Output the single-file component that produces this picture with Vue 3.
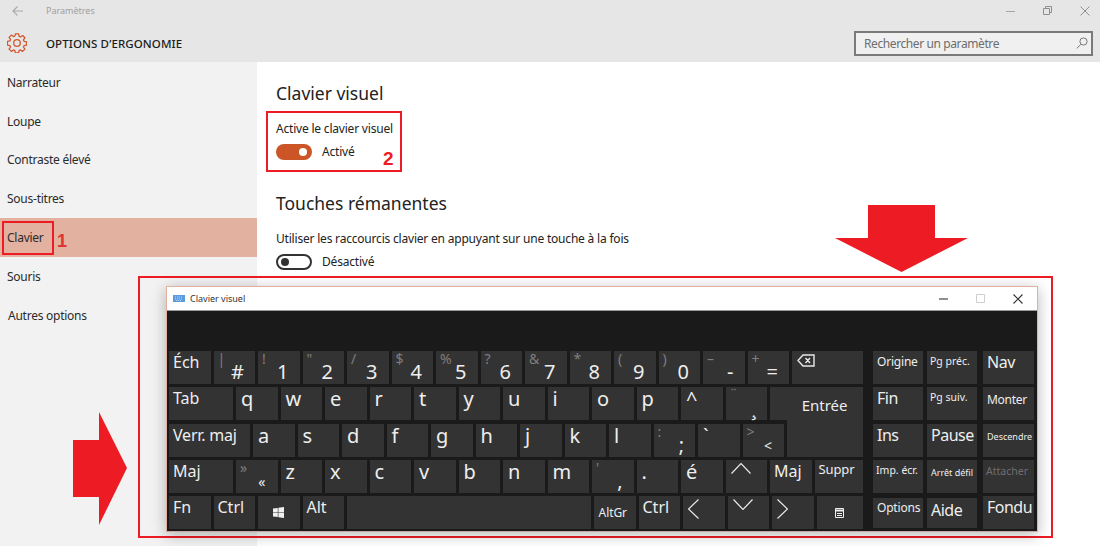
<script setup>
const nav = ['Narrateur', 'Loupe', 'Contraste élevé', 'Sous-titres', 'Clavier', 'Souris', 'Autres options']

const W = 41.5
const rows = [
  [
    { m: 'Éch', w: W, c: 'tl word' },
    { m: '#', s: '|', w: W, c: 'num' }, { m: '1', s: '!', w: W, c: 'num' }, { m: '2', s: '"', w: W, c: 'num' },
    { m: '3', s: '/', w: W, c: 'num' }, { m: '4', s: '$', w: W, c: 'num' }, { m: '5', s: '%', w: W, c: 'num' },
    { m: '6', s: '?', w: W, c: 'num' }, { m: '7', s: '&', w: W, c: 'num' }, { m: '8', s: '*', w: W, c: 'num' },
    { m: '9', s: '(', w: W, c: 'num' }, { m: '0', s: ')', w: W, c: 'num' }, { m: '-', s: '–', w: W, c: 'num' },
    { m: '=', s: '+', w: W, c: 'num' }, { icon: 'back', w: 71, c: 'tl' }
  ],
  [
    { m: 'Tab', w: 64, c: 'tl word' },
    ...['q', 'w', 'e', 'r', 't', 'y', 'u', 'i', 'o', 'p', '^'].map(m => ({ m, w: W, c: 'tl' })),
    { m: '¸', s: '¨', w: W, c: 'num' },
    { m: 'Entrée', w: 92.5, c: 'enter' }
  ],
  [
    { m: 'Verr. maj', w: 81, c: 'tl word tight' },
    ...['a', 's', 'd', 'f', 'g', 'h', 'j', 'k', 'l'].map(m => ({ m, w: W, c: 'tl' })),
    { m: ';', s: ':', w: W, c: 'num' }, { m: '`', w: W, c: 'tl' }, { m: '<', s: '>', w: W, c: 'num small' },
    { w: 76, c: 'tail' }
  ],
  [
    { m: 'Maj', w: 64, c: 'tl word' },
    { m: '«', s: '»', w: W, c: 'num small' },
    ...['z', 'x', 'c', 'v', 'b', 'n', 'm'].map(m => ({ m, w: W, c: 'tl' })),
    { m: ',', s: "'", w: W, c: 'num' }, { m: '.', w: W, c: 'tl' }, { m: 'é', w: W, c: 'tl' },
    { icon: 'up', w: W, c: 'tl' }, { m: 'Maj', w: W, c: 'tl word' }, { m: 'Suppr', w: 48, c: 'tl tiny' }
  ],
  [
    { m: 'Fn', w: W, c: 'tl word' }, { m: 'Ctrl', w: W, c: 'tl word' }, { icon: 'win', w: W, c: 'center' },
    { m: 'Alt', w: W, c: 'tl word' }, { w: 244, c: '' }, { m: 'AltGr', w: W, c: 'center tiny altgr' },
    { m: 'Ctrl', w: W, c: 'tl word' }, { icon: 'left', w: W, c: 'tl' }, { icon: 'down', w: W, c: 'tl' },
    { icon: 'right', w: W, c: 'tl' }, { icon: 'menu', w: 46, c: 'center' }
  ]
]

const side = [
  [{ m: 'Origine', c: 'tiny' }, { m: 'Pg préc.', c: 'mini' }, { m: 'Nav', c: 'big' }],
  [{ m: 'Fin', c: 'big' }, { m: 'Pg suiv.', c: 'mini' }, { m: 'Monter', c: 'tiny drop' }],
  [{ m: 'Ins', c: 'big' }, { m: 'Pause', c: 'big' }, { m: 'Descendre', c: 'micro' }],
  [{ m: 'Imp. écr.', c: 'mini' }, { m: 'Arrêt défil', c: 'micro' }, { m: 'Attacher', c: 'mini dim' }],
  [{ m: 'Options', c: 'tiny low' }, { m: 'Aide', c: 'big low' }, { m: 'Fondu', c: 'big' }]
]
</script>

<template>
  <div class="page">
    <header class="top">
      <div class="titlebar">
        <svg class="back" width="11" height="10" viewBox="0 0 11 10" fill="none" stroke="#a8a8a8" stroke-width="1.1">
          <path d="M11 5H1M5.500.500 1 5l4.500 4.500" />
        </svg>
        <span class="app-name">Paramètres</span>
        <div class="win-ctrls">
          <svg width="9" height="10" viewBox="0 0 9 10" fill="none" stroke="#a5a5a5"><path d="M0 5.500h9" /></svg>
          <svg width="9" height="9" viewBox="0 0 9 9" fill="none" stroke="#8f8f8f"><path d="M.5 2.500h6v6h-6zM2.500 2.500v-2h6v6h-2" /></svg>
          <svg width="10" height="10" viewBox="0 0 10 10" fill="none" stroke="#8f8f8f"><path d="m.5.500 9 9M9.500.500l-9 9" /></svg>
        </div>
      </div>
      <div class="headbar">
        <svg class="gear" width="20" height="20" viewBox="0 0 22 22" fill="none" stroke="#d2562c" stroke-width="1.4" stroke-linejoin="round">
          <path d="M9.200 1h3.600l.5 2.700 1.600.7 2.300-1.600 2.500 2.500-1.600 2.300.7 1.600 2.700.5v3.600l-2.700.5-.7 1.600 1.600 2.300-2.500 2.500-2.300-1.600-1.600.7-.5 2.700H9.200l-.5-2.700-1.600-.7-2.300 1.600-2.500-2.500 1.600-2.300-.7-1.600-2.700-.5V9.200l2.700-.5.700-1.600-1.600-2.300 2.500-2.500 2.300 1.600 1.600-.7z" />
          <circle cx="11" cy="11" r="3.600" />
        </svg>
        <h1>OPTIONS D’ERGONOMIE</h1>
        <div class="search">
          <span>Rechercher un paramètre</span>
          <svg width="12" height="12" viewBox="0 0 12 12" fill="none" stroke="#777" stroke-width="1"><circle cx="7.500" cy="4.500" r="3.600" /><path d="M5 7.200.8 11.400" /></svg>
        </div>
      </div>
    </header>

    <div class="main">
      <nav class="sidebar">
        <div v-for="n in nav" :key="n" class="nav-item" :class="{ selected: n === 'Clavier', shifted: n === 'Autres options' }">{{ n }}</div>
      </nav>
      <section class="content">
        <h2>Clavier visuel</h2>
        <p class="label">Active le clavier visuel</p>
        <div class="toggle-row">
          <span class="toggle on"></span><span>Activé</span>
        </div>
        <h2 class="second">Touches rémanentes</h2>
        <p class="label">Utiliser les raccourcis clavier en appuyant sur une touche à la fois</p>
        <div class="toggle-row">
          <span class="toggle off"></span><span>Désactivé</span>
        </div>
      </section>
    </div>

    <!-- red annotations -->
    <div class="box box-clavier"></div>
    <div class="box box-toggle"></div>
    <div class="box box-osk"></div>
    <span class="mark mark-1">1</span>
    <span class="mark mark-2">2</span>
    <svg class="arrow-down" width="133" height="67" viewBox="0 0 133 67"><path fill="#ed1c24" d="M33 0h67v33h33L66.500 67 0 33h33z" /></svg>
    <svg class="arrow-right" width="54" height="113" viewBox="0 0 54 113"><path fill="#ed1c24" d="M0 28h26V0l28 56-28 57V85H0z" /></svg>

    <!-- on-screen keyboard window -->
    <div class="osk">
      <div class="osk-title">
        <svg width="12" height="7" viewBox="0 0 12 7"><rect width="12" height="7" fill="#5b9bdc" /><path d="M2 2h8M2 4h8M3 5.500h6" stroke="#d5e6f7" stroke-width=".8" stroke-dasharray="1 1" /></svg>
        <span>Clavier visuel</span>
        <div class="osk-ctrls">
          <svg width="9" height="10" viewBox="0 0 9 10" fill="none" stroke="#444" stroke-width="1.200"><path d="M0 5h9" /></svg>
          <svg width="9" height="9" viewBox="0 0 9 9" fill="none" stroke="#cfcfcf"><path d="M.5.500h8v8h-8z" /></svg>
          <svg width="10" height="10" viewBox="0 0 10 10" fill="none" stroke="#333" stroke-width="1.100"><path d="m.5.500 9 9M9.500.500l-9 9" /></svg>
        </div>
      </div>
      <div class="osk-body">
        <div class="pad">
          <div v-for="(row, i) in rows" :key="i" class="kb-row">
            <div v-for="(k, j) in row" :key="j" class="key" :class="k.c" :style="{ width: k.w + 'px' }">
              <span v-if="k.s" class="sub">{{ k.s }}</span>
              <span v-if="k.m" class="m">{{ k.m }}</span>
              <svg v-if="k.icon === 'back'" width="18" height="13" viewBox="0 0 18 13" fill="none" stroke="#e8e8e8" stroke-width="1.400"><path d="M6 1h11v11H6L1 6.500zM8.500 4l4.500 5M13 4 8.500 9" /></svg>
              <svg v-if="k.icon === 'up'" width="20" height="11" viewBox="0 0 20 11" fill="none" stroke="#eee" stroke-width="1.100"><path d="m.5 10.500 9.500-10 9.500 10" /></svg>
              <svg v-if="k.icon === 'down'" width="20" height="11" viewBox="0 0 20 11" fill="none" stroke="#eee" stroke-width="1.100"><path d="m.5.500 9.500 10 9.500-10" /></svg>
              <svg v-if="k.icon === 'left'" width="11" height="20" viewBox="0 0 11 20" fill="none" stroke="#eee" stroke-width="1.100"><path d="M10.500.500.500 10l10 9.500" /></svg>
              <svg v-if="k.icon === 'right'" width="11" height="20" viewBox="0 0 11 20" fill="none" stroke="#eee" stroke-width="1.100"><path d="m.5.500 10 9.500-10 9.500" /></svg>
              <svg v-if="k.icon === 'win'" width="11" height="11" viewBox="0 0 11 11" fill="#f0f0f0"><path d="M0 1.600 4.800.9v4.300H0zM5.400.8 11 0v5.200H5.400zM0 5.800h4.800v4.300L0 9.400zM5.400 5.800H11V11l-5.600-.8z" /></svg>
              <svg v-if="k.icon === 'menu'" width="9" height="10" viewBox="0 0 9 10" fill="none" stroke="#eee"><path d="M.5.500h8v9h-8z" /><path d="M1 2.500h7" stroke-width="2" /><path d="M2 5.500h5M2 7.500h5" /></svg>
            </div>
          </div>
        </div>
        <div class="side-pad">
          <div v-for="(row, i) in side" :key="i" class="side-row">
            <div v-for="k in row" :key="k.m" class="key side-key" :class="k.c"><span class="m">{{ k.m }}</span></div>
          </div>
        </div>
      </div>
    </div>
  </div>
</template>

<style>
html, body { margin: 0; background: #fff; overflow: hidden; }
</style>

<style scoped>
.page {
  position: relative;
  width: 1100px;
  height: 546px;
  overflow: hidden;
  display: flex;
  flex-direction: column;
  font-family: "Noto Sans", "Open Sans", sans-serif;
  color: #222;
}
.top { background: #e6e6e6; height: 62px; flex: none; }
.titlebar { height: 21px; display: flex; align-items: center; padding: 0 10px 0 12px; }
.app-name { margin-left: 23px; font-size: 9px; color: #a0a0a0; }
.win-ctrls { margin-left: auto; display: flex; align-items: center; gap: 28px; }
.headbar { height: 41px; box-sizing: border-box; display: flex; align-items: center; padding: 3px 7px 0; }
.gear { flex: none; }
.headbar h1 { margin: 0 0 0 19px; font-size: 11.500px; font-weight: 500; color: #1c1c1c; letter-spacing: .1px; }
.search {
  margin-left: auto;
  width: 239px;
  height: 25px;
  box-sizing: border-box;
  border: 2px solid #7a7a7a;
  background: #f0f0f0;
  display: flex;
  align-items: center;
  justify-content: space-between;
  padding: 0 3px 0 8px;
  font-size: 12px;
  letter-spacing: -.4px;
  color: #6d6d6d;
}
.main { flex: 1; display: flex; min-height: 0; }
.sidebar { width: 257px; flex: none; background: #f2f2f2; padding-top: 1px; }
.nav-item { height: 38.800px; box-sizing: border-box; display: flex; align-items: center; padding: 0 0 0 7px; font-size: 12px; letter-spacing: -.25px; color: #2b2b2b; }
.nav-item.selected { background: #e2b1a0; }
.nav-item.shifted { padding-left: 8px; }
.content { flex: 1; padding: 19px 0 0 19px; }
.content h2 { margin: 0; font-size: 17.500px; font-weight: 400; line-height: 24px; color: #222; }
.content h2.second { margin-top: 31px; }
.label { margin: 16px 0 0; font-size: 12px; letter-spacing: -.2px; line-height: 16px; color: #222; }
.toggle-row { display: flex; align-items: center; gap: 10px; margin-top: 7px; font-size: 12px; letter-spacing: -.2px; line-height: 16px; height: 16px; }
.toggle { width: 36px; height: 16px; box-sizing: border-box; border-radius: 8px; position: relative; }
.toggle.on { background: #cc5528; }
.toggle.on::after { content: ""; position: absolute; right: 5px; top: 4px; width: 8px; height: 8px; border-radius: 50%; background: #fff; }
.toggle.off { border: 2px solid #333; }
.toggle.off::after { content: ""; position: absolute; left: 3px; top: 2px; width: 8px; height: 8px; border-radius: 50%; background: #333; }

.box { position: absolute; box-sizing: border-box; border: 2px solid #ed1c24; }
.box-clavier { left: 2px; top: 221px; width: 52px; height: 34px; }
.box-toggle { left: 266px; top: 111px; width: 136px; height: 61px; }
.box-osk { left: 138px; top: 276px; width: 915px; height: 262px; }
.mark { position: absolute; color: #ed1c24; font-family: "Liberation Sans", sans-serif; line-height: 1; }
.mark-1 { left: 57px; top: 232px; font-size: 18px; font-weight: 700; color: #e0342c; }
.mark-2 { left: 383px; top: 149px; font-size: 19px; font-weight: 700; }
.arrow-down { position: absolute; left: 835px; top: 205px; }
.arrow-right { position: absolute; left: 73px; top: 412px; }

.osk {
  position: absolute;
  left: 166px;
  top: 286px;
  width: 872px;
  height: 246px;
  box-sizing: border-box;
  background: #1a1a1a;
  border: 1px solid #e3b0a0;
  border-bottom-color: #c9a89e;
  box-shadow: 0 3px 14px rgba(0, 0, 0, .28);
  display: flex;
  flex-direction: column;
}
.osk-title {
  height: 24px;
  flex: none;
  background: #fff;
  border-bottom: 1px solid #9a9a9a;
  box-sizing: border-box;
  display: flex;
  align-items: center;
  padding: 0 14px 0 6px;
  font-size: 9px;
  color: #333;
  gap: 5px;
}
.osk-ctrls { margin-left: auto; display: flex; align-items: center; gap: 28px; }
.osk-body { flex: 1; display: flex; padding: 40px 0 0 2px; gap: 10px; }
.pad, .side-pad { display: flex; flex-direction: column; gap: 3px; }
.kb-row { display: flex; gap: 3px; height: 33px; }
.kb-row:nth-child(2) { margin-bottom: 1px; }
.side-row { display: flex; gap: 4px; height: 33px; }
.side-row:nth-child(2) { margin-bottom: 1px; }
.side-key:nth-child(3) { margin-left: 2px; width: 51px; }
.key {
  position: relative;
  box-sizing: border-box;
  flex: none;
  background: #333;
  color: #eee;
  font-size: 20px;
  line-height: 1;
}
.m { white-space: nowrap; }
.tl { padding: 2px 0 0 5px; }
.tl .m { display: block; }
.tl svg { display: block; margin-top: 1px; }
.word { font-size: 16px; padding-top: 3px; padding-left: 4px; }
.tight { letter-spacing: -.2px; }
.tiny { font-size: 13px; padding-top: 3px; padding-left: 4px; letter-spacing: -.1px; }
.center { display: flex; align-items: center; justify-content: center; }
.center.tiny { padding: 0; }
.altgr { font-size: 12px; padding-right: 4px !important; }
.num { display: flex; justify-content: flex-end; align-items: flex-end; padding: 0 11px 2px 0; }
.num .sub { position: absolute; left: 4px; top: 1px; font-size: 14px; color: #7f7f7f; }
.small { font-size: 14px; padding-bottom: 4px; padding-right: 12px; }
.enter { display: flex; align-items: center; justify-content: flex-end; padding: 3px 15px 0 0; font-size: 15px; }
.tail { margin-top: -4px; }
.side-key { width: 50px; padding: 4px 0 0 4px; }
.side-key.big { font-size: 16px; letter-spacing: -.5px; padding-top: 3px; }
.side-key.tiny { font-size: 12px; padding-top: 5px; padding-left: 4px; letter-spacing: -.2px; }
.side-key.drop { padding-top: 7px; letter-spacing: -.3px; }
.side-key.mini { font-size: 10.500px; padding-top: 5px; padding-left: 3px; }
.side-key.micro { font-size: 9px; padding-top: 8px; padding-left: 4px; }
.side-key.dim { color: #6f6f6f; padding-top: 6px; }
.side-key.low { margin-top: 2px; height: 30px; padding-top: 4px; }
</style>
